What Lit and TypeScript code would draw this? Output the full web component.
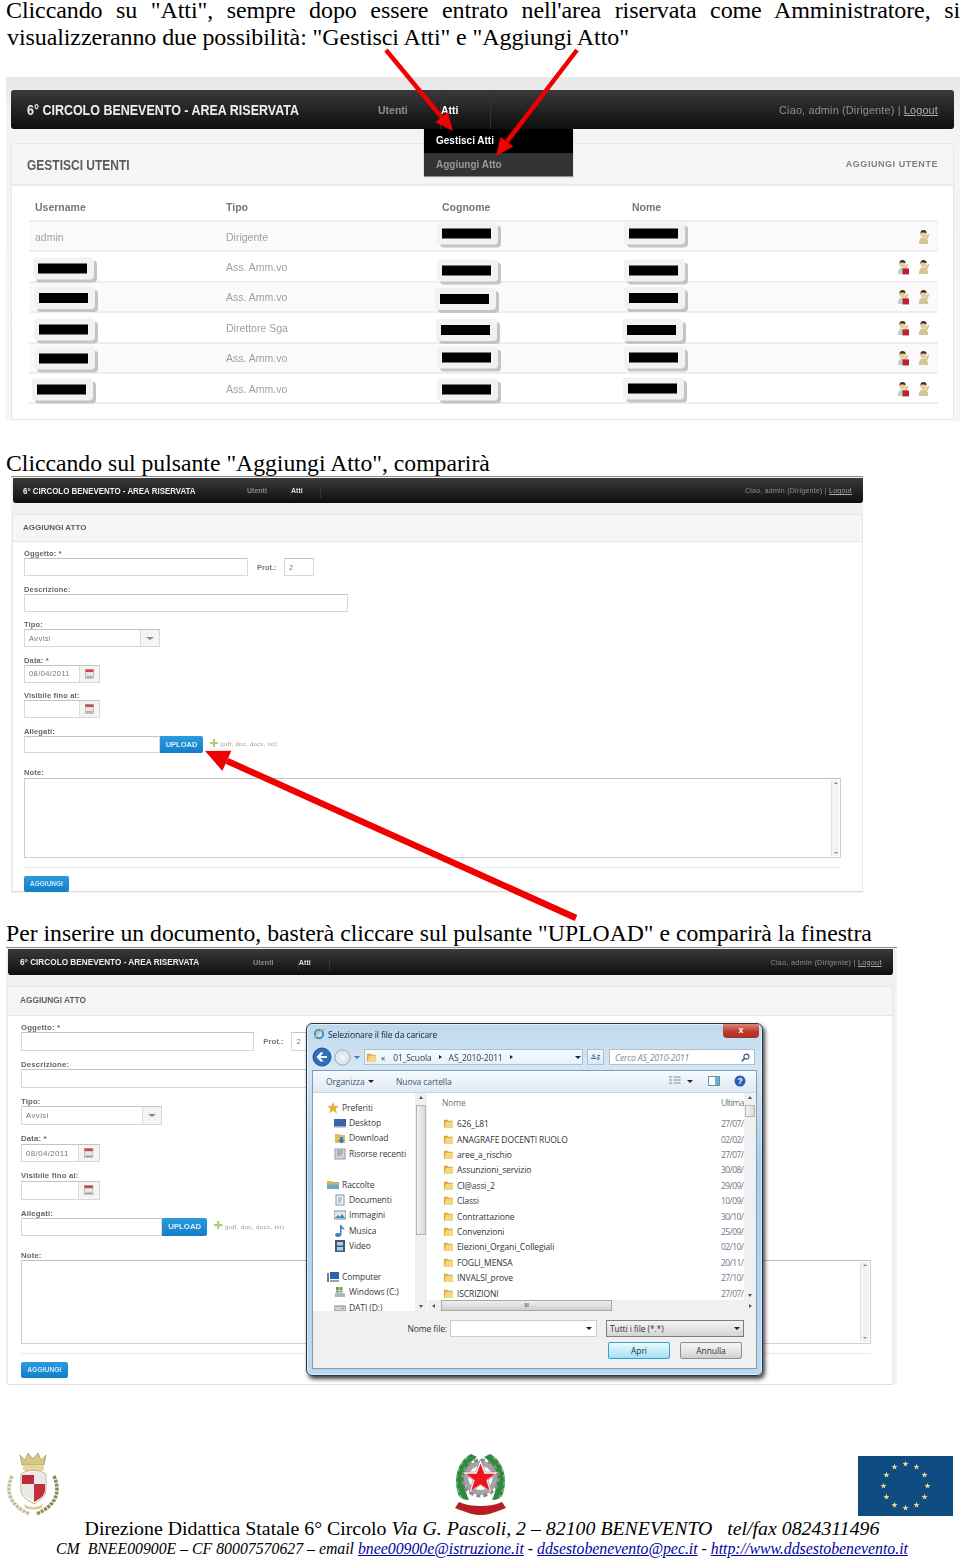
import { LitElement, html, css, svg, nothing } from "lit";
import { customElement, property } from "lit/decorators.js";

/* ---------- small icons ---------- */
const folder = html`<svg class="ic" viewBox="0 0 12 12" width="11" height="11"><path d="M1 2h4l1 1h4.5v8H1z" fill="#d9a93f"/><path d="M3 4h8v7H1.5z" fill="#f3d77f"/></svg>`;

const person = (del: boolean) => html`<svg viewBox="0 0 14 17" width="13" height="16">
  <path d="M2 16c0-5 2-7 5-7s5 2 5 7z" fill="${del ? "#b5d3cf" : "#d3c595"}"/>
  <path d="M9 9l3-4 1.5 1-2.5 5z" fill="#d3c595"/>
  <circle cx="7" cy="5.5" r="3.2" fill="#ecc99a"/>
  <path d="M3.6 5c0-3 1.6-4 3.4-4s3.4 1 3.4 3.4C8.5 4 6 3.8 5 3.5 4.8 4.5 4.3 5 3.6 5z" fill="#3a2c18"/>
  ${del ? svg`<rect x="7" y="10" width="7" height="6.5" fill="#c3202f"/>` : nothing}
</svg>`;

const calendar = html`<svg viewBox="0 0 10 11" width="9" height="10"><rect x=".5" y=".5" width="9" height="10" fill="#e6e6e6" stroke="#999" stroke-width=".6"/><rect x=".5" y=".5" width="9" height="2.8" fill="#d0454c"/><rect x="1.5" y="8" width="7" height="1.5" fill="#9a9a9a"/></svg>`;

/* ---------- dark site bar ---------- */
@customElement("site-bar")
class SiteBar extends LitElement {
  static styles = css`
    :host {
      display: flex;
      align-items: center;
      height: 39px;
      padding: 0 16px;
      box-sizing: border-box;
      border-radius: 3px;
      background: linear-gradient(#3a3a3a, #262626 45%, #0e0e0e);
      font-family: "Liberation Sans", Arial, sans-serif;
      color: #8f8f8f;
      font-size: 10.5px;
    }
    .t {
      width: 351px;
      flex: none;
      font-weight: 700;
      font-size: 15px;
      color: #eee;
      white-space: nowrap;
    }
    .t span { display: inline-block; transform: scaleX(.832); transform-origin: 0 50%; }
    .n {
      display: flex;
      align-items: center;
      width: 63px;
      height: 100%;
      font-weight: 700;
      box-sizing: border-box;
      border-right: 1px solid #333;
    }
    .n.on { color: #fff; width: 50px; }
    .r { margin-left: auto; font-size: 11px; letter-spacing: .1px; }
    .r u { color: #aaa; }
    :host([compact]) {
      height: 25px;
      padding: 0 11px 0 10px;
      border-radius: 0 0 3px 3px;
      font-size: 7px;
    }
    :host([compact]) .t { width: 224px; font-size: 9px; }
    :host([compact]) .t span { transform: scaleX(.88); }
    :host([compact]) .n { width: 44px; height: 60%; color: #888; }
    :host([compact]) .n.on { color: #ddd; width: 30px; }
    :host([compact]) .r { font-size: 7px; letter-spacing: .25px; }
  `;
  render() {
    return html`<div class="t"><span>6° CIRCOLO BENEVENTO - AREA RISERVATA</span></div>
      <div class="n">Utenti</div>
      <div class="n on">Atti</div>
      <div class="r">Ciao, admin (Dirigente) | <u>Logout</u></div>`;
  }
}

/* ---------- first screenshot: Gestisci utenti ---------- */
type Off = [number, number] | null;
const rows: { user: string; tipo: string; u: Off; c: Off; n: Off; del: boolean }[] = [
  { user: "admin", tipo: "Dirigente", u: null, c: [-5, -4], n: [-8, -4], del: false },
  { user: "", tipo: "Ass. Amm.vo", u: [-2, 1], c: [-5, 3], n: [-8, 3], del: true },
  { user: "", tipo: "Ass. Amm.vo", u: [-1, 0.5], c: [-7, 1.5], n: [-8, 0.5], del: true },
  { user: "", tipo: "Direttore Sga", u: [-1, 1], c: [-6, 1.5], n: [-10, 1.5], del: true },
  { user: "", tipo: "Ass. Amm.vo", u: [-1, 0], c: [-5, -1], n: [-8, -1], del: true },
  { user: "", tipo: "Ass. Amm.vo", u: [-3, 0], c: [-5, 0], n: [-9, -1], del: true },
];

@customElement("users-shot")
class UsersShot extends LitElement {
  static styles = css`
    :host {
      display: block;
      position: relative;
      margin-left: 6px;
      width: 954px;
      height: 344px;
      padding: 13px 0 0 5px;
      box-sizing: border-box;
      background: linear-gradient(#e6e6e6, #f3f3f3 10%, #f6f6f6);
      font-family: "Liberation Sans", Arial, sans-serif;
      filter: blur(.35px);
    }
    site-bar { width: 943px; box-sizing: border-box; }
    .card {
      margin-top: 14px;
      width: 943px;
      height: 277px;
      box-sizing: border-box;
      border: 1px solid #e6e6e6;
      border-radius: 4px;
      background: #fff;
      overflow: hidden;
    }
    .head {
      display: flex;
      align-items: center;
      justify-content: space-between;
      height: 42px;
      padding: 0 15px;
      background: #f6f6f6;
      border-bottom: 2px solid #eaeaea;
      box-sizing: border-box;
    }
    h2 {
      margin: 0;
      font-size: 15px;
      color: #5a5a5a;
      transform: scaleX(.8);
      transform-origin: 0 50%;
    }
    .add { font-size: 9px; font-weight: 700; color: #808080; letter-spacing: .55px; }
    .table { margin: 0 15px 0 17px; }
    .tr {
      display: grid;
      grid-template-columns: 191px 216px 190px 1fr auto;
      align-items: center;
      height: 30.4px;
      box-sizing: border-box;
      padding: 1px 0 0 6px;
      border-bottom: 2px solid #eeeeee;
      font-size: 10.5px;
      color: #a0a0a0;
    }
    .tr.alt { background: #fafafa; }
    .tr.th { height: 36px; padding-top: 8px; font-weight: 700; color: #777; }
    .key {
      width: 61px;
      height: 22px;
      padding: 6px 0 0 5px;
      box-sizing: border-box;
      border-radius: 4px;
      background: #f2f2f2;
      box-shadow: 3px 3px 0 #c4c4c4;
    }
    .key i { display: block; width: 49px; height: 10px; background: #000; }
    .act {
      display: flex;
      justify-content: flex-end;
      gap: 8px;
      padding-right: 8px;
    }
    .drop {
      position: absolute;
      left: 418px;
      top: 52px;
      width: 149px;
      height: 47px;
      font-size: 10px;
      font-weight: 700;
      background: #333;
      box-shadow: 0 1px 1px rgba(0, 0, 0, .4);
    }
    .drop div { height: 23.5px; line-height: 24px; padding-left: 12px; color: #999; }
    .drop div:first-child { background: #000; color: #fff; }
  `;
  private key(o: Off) {
    if (!o) return nothing;
    return html`<div class="key" style="transform:translate(${o[0]}px,${o[1] + 0.5}px)"><i></i></div>`;
  }
  render() {
    return html`<site-bar></site-bar>
      <div class="card">
        <div class="head"><h2>GESTISCI UTENTI</h2><span class="add">AGGIUNGI UTENTE</span></div>
        <div class="table">
          <div class="tr th"><span>Username</span><span>Tipo</span><span>Cognome</span><span>Nome</span></div>
          ${rows.map(
            (r, i) => html`<div class="tr ${i % 2 ? "" : "alt"}">
              ${r.u ? this.key(r.u) : html`<span>${r.user}</span>`}
              <span>${r.tipo}</span>
              ${this.key(r.c)}
              ${this.key(r.n)}
              <div class="act">${r.del ? person(true) : nothing}${person(false)}</div>
            </div>`
          )}
        </div>
      </div>
      <div class="drop"><div>Gestisci Atti</div><div>Aggiungi Atto</div></div>`;
  }
}

/* ---------- second / third screenshot: Aggiungi atto form ---------- */
@customElement("atto-shot")
class AttoShot extends LitElement {
  static styles = css`
    :host {
      display: block;
      width: 852px;
      height: 417px;
      box-sizing: border-box;
      border-top: 1px solid #8c8c8c;
      background: #f1f1f1;
      font-family: "Liberation Sans", Arial, sans-serif;
      filter: blur(.4px);
      --gap: 7.5px;
      --up: 8px;
      --nm: 1px;
      --bl: 11px;
      --tl: 10px;
      --hl: 10px;
    }
    :host([wide]) {
      zoom: 1.04;
      width: 857px;
      height: 420px;
      --gap: 7.75px;
      --up: 7px;
      --nm: 0px;
      --bl: 12.4px;
      --tl: 11.5px;
      --hl: 11.5px;
    }
    site-bar { margin: 1px 0 0 2px; padding-left: var(--tl) !important; }
    :host([wide]) site-bar { margin-right: 4px; }
    .card {
      margin: 11px 0 0 1px;
      border: 1px solid #e8e8e8;
      border-bottom: 1px solid #ddd;
      background: #fff;
      height: 378px;
      box-sizing: border-box;
    }
    :host([wide]) .card { margin-right: 4px; height: 383px; }
    .head {
      height: 26px;
      line-height: 26px;
      padding-left: var(--hl);
      background: #f6f6f6;
      border-bottom: 1px solid #e6e6e6;
      font-size: 8px;
      font-weight: 700;
      color: #5e5e5e;
    }
    .body { padding: 7px 0 0 var(--bl); }
    .lab {
      height: 9px;
      line-height: 9px;
      font-size: 7.5px;
      font-weight: 700;
      color: #666;
      letter-spacing: .15px;
    }
    .row {
      display: flex;
      align-items: center;
      height: 18px;
      margin-bottom: calc(var(--gap) + 1px);
      color: #777;
      font-size: 7.5px;
    }
    .in {
      height: 18px;
      box-sizing: border-box;
      display: flex;
      align-items: center;
      border: 1px solid #d8d8d8;
      border-top-color: #c4c4c4;
      background: #fff;
      padding-left: 4px;
      letter-spacing: .4px;
    }
    .seg {
      margin-left: auto;
      align-self: stretch;
      display: flex;
      align-items: center;
      justify-content: center;
      border-left: 1px solid #ddd;
      background: #f4f4f4;
    }
    .arr { width: 0; height: 0; border: 4px solid transparent; border-top: 3px solid #888; border-bottom: 0; }
    .prot { margin: 0 7px 0 9px; width: 20px; font-weight: 700; white-space: nowrap; }
    .up {
      display: flex;
      align-items: center;
      justify-content: center;
      width: 43px;
      height: 17px;
      background: linear-gradient(#2a9be0, #137ec6);
      border-radius: 0 2px 2px 0;
      color: #dff1fb;
      font-size: 7.5px;
      font-weight: 700;
    }
    .plus { margin: -3px 2px 0 7px; }
    .ext { font-size: 6px; color: #999; letter-spacing: .3px; white-space: nowrap; }
    .row.up-row { height: 17px; margin-bottom: calc(var(--gap) + var(--up)); }
    .note-lab { margin-bottom: var(--nm); }
    .note {
      width: 817px;
      height: 80px;
      box-sizing: border-box;
      border: 1px solid #d0d0d0;
      border-top-color: #c0c0c0;
      background: #fff;
      display: flex;
      justify-content: flex-end;
      padding: 1px;
      margin-bottom: 9px;
    }
    .sb { width: 8px; background: #f3f3f3; border-left: 1px solid #e4e4e4; display: flex; flex-direction: column; justify-content: space-between; align-items: center; padding: 2px 0; box-sizing: border-box; }
    .sb i { width: 0; height: 0; border: 2px solid transparent; }
    .sb i:first-child { border-bottom: 2px solid #888; border-top: 0; }
    .sb i:last-child { border-top: 2px solid #888; border-bottom: 0; }
    .hr { width: 817px; height: 1px; background: #eaeaea; margin-bottom: 7.5px; }
    .btn {
      width: 45px;
      height: 16px;
      line-height: 16px;
      text-align: center;
      background: linear-gradient(#2a9be0, #137ec6);
      border-radius: 2px;
      color: #cfe9f8;
      font-size: 6.5px;
      font-weight: 700;
    }
  `;
  @property({ type: Boolean, reflect: true }) wide = false;
  render() {
    return html`<site-bar compact></site-bar>
      <div class="card">
        <div class="head">AGGIUNGI ATTO</div>
        <div class="body">
          <div class="lab">Oggetto: *</div>
          <div class="row"><div class="in" style="width:224px"></div><span class="prot">Prot.:</span><div class="in" style="width:30px">2</div></div>
          <div class="lab">Descrizione:</div>
          <div class="row"><div class="in" style="width:324px"></div></div>
          <div class="lab">Tipo:</div>
          <div class="row"><div class="in" style="width:136px">Avvisi<span class="seg" style="width:18px"><i class="arr"></i></span></div></div>
          <div class="lab">Data: *</div>
          <div class="row"><div class="in" style="width:76px">08/04/2011<span class="seg" style="width:19px">${calendar}</span></div></div>
          <div class="lab">Visibile fino al:</div>
          <div class="row"><div class="in" style="width:76px"><span class="seg" style="width:19px">${calendar}</span></div></div>
          <div class="lab">Allegati:</div>
          <div class="row up-row">
            <div class="in" style="width:136px;height:17px"></div>
            <div class="up">UPLOAD</div>
            <svg class="plus" viewBox="0 0 8 8" width="8" height="8"><path d="M3 0h2v3h3v2H5v3H3V5H0V3h3z" fill="#a5cf7a"/></svg>
            <span class="ext">(pdf, doc, docx, txt)</span>
          </div>
          <div class="lab note-lab">Note:</div>
          <div class="note"><div class="sb"><i></i><i></i></div></div>
          <div class="hr"></div>
          <div class="btn">AGGIUNGI</div>
        </div>
      </div>`;
  }
}

/* ---------- Windows 7 file dialog ---------- */
const nav: { t: string; lv: number; ic: string }[] = [
  { t: "Preferiti", lv: 0, ic: "star" },
  { t: "Desktop", lv: 1, ic: "desk" },
  { t: "Download", lv: 1, ic: "fold" },
  { t: "Risorse recenti", lv: 1, ic: "rec" },
  { t: "", lv: 0, ic: "" },
  { t: "Raccolte", lv: 0, ic: "lib" },
  { t: "Documenti", lv: 1, ic: "doc" },
  { t: "Immagini", lv: 1, ic: "img" },
  { t: "Musica", lv: 1, ic: "mus" },
  { t: "Video", lv: 1, ic: "vid" },
  { t: "", lv: 0, ic: "" },
  { t: "Computer", lv: 0, ic: "pc" },
  { t: "Windows (C:)", lv: 1, ic: "drv" },
  { t: "DATI (D:)", lv: 1, ic: "hd" },
];
const navIcon: Record<string, unknown> = {
  star: svg`<path d="M6 0l1.7 4H12L8.6 6.7 10 11.5 6 8.8 2 11.5l1.4-4.8L0 4h4.3z" fill="#e8b23c"/>`,
  desk: svg`<rect x="0" y="2" width="12" height="8" fill="#3a64a8"/><rect x="0" y="9" width="12" height="1.5" fill="#9ab"/>`,
  fold: svg`<path d="M1 2h4l1 1h5v8H1z" fill="#e2bc5c"/><path d="M6 5h3v3h2l-3.5 3.5L4 8h2z" fill="#2f7fc6"/>`,
  rec: svg`<rect x="1" y="1" width="10" height="10" fill="#cfd6de" stroke="#99a"/><path d="M3 3h6M3 5h6M3 7h4" stroke="#889"/>`,
  lib: svg`<path d="M0 3h12v7H0z" fill="#6aa9c9"/><path d="M0 2h5l1 1.5H12v2H0z" fill="#d9b453"/>`,
  doc: svg`<rect x="2" y="1" width="8" height="10" fill="#eef1f4" stroke="#8a97a5"/><path d="M4 4h4M4 6h4M4 8h3" stroke="#8a97a5"/>`,
  img: svg`<rect x="0" y="2" width="12" height="8" fill="#dfe8ef" stroke="#7f8f9f"/><path d="M1 9l3-3 2 2 2-3 3 4z" fill="#3f88b5"/>`,
  mus: svg`<path d="M6 0h1.5c0 2 3 2 3 5-1-1-2-1.5-3-1.5V9.5C7.5 11 6 12 4 12S1 11 1 9.8 2.5 8 4 8c1 0 1.5.3 2 .6z" fill="#3d7fc4"/>`,
  vid: svg`<rect x="1" y="0" width="10" height="12" fill="#47596b"/><rect x="3" y="2" width="6" height="3.5" fill="#a8d0e8"/><rect x="3" y="7" width="6" height="3.5" fill="#a8d0e8"/>`,
  pc: svg`<rect x="3" y="1" width="9" height="7" fill="#2b63b4"/><rect x="0" y="2" width="2" height="9" fill="#77808a"/><rect x="3" y="9" width="9" height="2" fill="#9aa4ae"/>`,
  drv: svg`<rect x="1" y="7" width="10" height="4" fill="#aeb6bd"/><path d="M2 1h3v3H2zM5.5 1h3v3h-3zM2 4.5h3v2H2zM5.5 4.5h3v2h-3z" fill="#6ea05c"/>`,
  hd: svg`<rect x="0" y="4" width="12" height="5" rx="1" fill="#cfd4d8" stroke="#888"/><rect x="8" y="6" width="2" height="1" fill="#5a5"/>`,
};
const files: [string, string][] = [
  ["626_L81", "27/07/"],
  ["ANAGRAFE DOCENTI RUOLO", "02/02/"],
  ["aree_a_rischio", "27/07/"],
  ["Assunzioni_servizio", "30/08/"],
  ["Cl@assi_2", "29/09/"],
  ["Classi", "10/09/"],
  ["Contrattazione", "30/10/"],
  ["Convenzioni", "25/09/"],
  ["Elezioni_Organi_Collegiali", "02/10/"],
  ["FOGLI_MENSA", "20/11/"],
  ["INVALSI_prove", "27/10/"],
  ["ISCRIZIONI", "27/07/"],
];

@customElement("file-dialog")
class FileDialog extends LitElement {
  static styles = css`
    :host {
      display: flex;
      flex-direction: column;
      width: 457px;
      height: 353px;
      box-sizing: border-box;
      padding: 0 5px 6px;
      border: 1px solid #2a3644;
      border-radius: 6px;
      background: linear-gradient(180deg, #bcd8ee, #d4e6f4 12%, #a9cde9 40%, #bcd9ef);
      box-shadow: 2px 3px 4px rgba(0, 0, 0, .75), inset 0 0 0 1px rgba(255, 255, 255, .5);
      font-family: "Open Sans", "Noto Sans", sans-serif;
      font-size: 8.5px;
      letter-spacing: -.1px;
      color: #3a3a3a;
      filter: blur(.35px);
    }
    .title { height: 24px; padding-bottom: 4px; box-sizing: border-box; flex: none; display: flex; align-items: center; padding-left: 1px; color: #223; position: relative; }
    .title svg { margin-right: 3px; }
    .close {
      position: absolute;
      right: -2px;
      top: 0;
      width: 36px;
      height: 14px;
      border-radius: 0 0 4px 4px;
      background: linear-gradient(#d9867a, #c0392b 55%, #a83226);
      color: #fff;
      font: 700 9px/13px "Liberation Sans", sans-serif;
      text-align: center;
    }
    .addr { height: 18px; flex: none; display: flex; align-items: center; gap: 0; margin-bottom: 4px; }
    .box {
      height: 16px;
      box-sizing: border-box;
      display: flex;
      align-items: center;
      background: #fff;
      border: 1px solid #a9bfd4;
      white-space: nowrap;
    }
    .path { margin-left: 4px; width: 219px; gap: 4px; padding-left: 1px; background: linear-gradient(#f6fbff, #e5f1fa); }
    .tri { width: 0; height: 0; border: 3px solid transparent; border-top: 3px solid #222; border-bottom: 0; flex: none; }
    .tr { width: 0; height: 0; border: 2.5px solid transparent; border-left: 3px solid #222; border-right: 0; flex: none; }
    .ref { margin-left: 4px; width: 17px; justify-content: center; background: linear-gradient(#f3f8fc, #dbe8f3); }
    .find { margin-left: 5px; width: 146px; padding: 0 4px 0 5px; font-style: italic; color: #7d8791; justify-content: space-between; }
    .inner {
      flex: 1;
      min-height: 0;
      display: flex;
      flex-direction: column;
      background: #fff;
      border: 1px solid #7f9db9;
      overflow: hidden;
    }
    .tools {
      height: 22px;
      flex: none;
      display: flex;
      align-items: center;
      padding: 0 10px 1px 13px;
      background: linear-gradient(#f6fafd, #dfeaf4);
      border-bottom: 1px solid #c7d5e2;
      box-sizing: border-box;
      color: #45586c;
    }
    .tools .o { display: flex; align-items: center; gap: 3px; width: 70px; }
    .tools .right { margin-left: auto; display: flex; align-items: center; }
    .mid { flex: 1; min-height: 0; display: flex; }
    .nav { width: 101px; flex: none; padding-top: 7px; }
    .it { height: 15.4px; line-height: 8px; display: flex; align-items: center; white-space: nowrap; padding-left: 14px; gap: 3px; }
    .it.s { padding-left: 21px; }
    .it svg { flex: none; }
    .vs { width: 12px; flex: none; background: #f0f0f0; display: flex; flex-direction: column; justify-content: space-between; align-items: center; padding: 3px 0; box-sizing: border-box; position: relative; }
    .vs.a { margin: 0 1px; }
    .up { width: 0; height: 0; border: 2.5px solid transparent; border-bottom: 3px solid #555; border-top: 0; }
    .dn { width: 0; height: 0; border: 2.5px solid transparent; border-top: 3px solid #555; border-bottom: 0; }
    .th { position: absolute; left: 1px; right: 1px; background: linear-gradient(90deg, #f3f3f3, #d9d9d9); border: 1px solid #b5b5b5; box-sizing: border-box; }
    .main { flex: 1; min-width: 0; display: flex; flex-direction: column; }
    .listwrap { flex: 1; min-height: 0; display: flex; }
    .list { flex: 1; min-width: 0; }
    .lh { height: 19px; display: flex; align-items: center; justify-content: space-between; padding-left: 14px; color: #69788a; margin-bottom: 4px; }
    .lh span:last-child, .date { width: 23px; white-space: nowrap; flex: none; color: #69788a; letter-spacing: -.55px; }
    .f { height: 15.42px; display: flex; align-items: center; padding-left: 15px; gap: 3px; white-space: nowrap; color: #333; }
    .f .nm { flex: 1; min-width: 0; }
    .hs { height: 11px; flex: none; background: #f0f0f0; position: relative; display: flex; align-items: center; justify-content: space-between; padding: 0 4px; box-sizing: border-box; }
    .hs .tb { position: absolute; left: 13px; top: 0; bottom: 0; width: 171px; background: linear-gradient(#efefef, #cfcfcf); border: 1px solid #a8a8a8; box-sizing: border-box; text-align: center; font: 6px/8px "Liberation Sans", sans-serif; }
    .lt { width: 0; height: 0; border: 2.5px solid transparent; border-right: 3px solid #555; border-left: 0; }
    .rt { width: 0; height: 0; border: 2.5px solid transparent; border-left: 3px solid #555; border-right: 0; }
    .bottom { height: 57px; flex: none; background: #f0f0f0; position: relative; padding: 9px 12px 0 0; box-sizing: border-box; }
    .b1 { display: flex; align-items: center; justify-content: flex-end; height: 17px; }
    .b1 .nf { margin-right: 3px; color: #333; }
    .nfin { width: 147px; justify-content: flex-end; padding-right: 4px; height: 17px; border-color: #c6ced6; }
    .sel {
      margin-left: 9px;
      width: 138px;
      height: 17px;
      padding: 0 3px;
      justify-content: space-between;
      background: linear-gradient(#f4f4f4, #d5d5d5);
      border-color: #7d7d7d;
      color: #333;
    }
    .b2 { display: flex; justify-content: flex-end; gap: 10px; margin: 5px 2px 0 0; }
    .bt {
      width: 62px;
      height: 17px;
      line-height: 15px;
      box-sizing: border-box;
      text-align: center;
      border: 1px solid #8d8d8d;
      border-radius: 2px;
      background: linear-gradient(#f5f5f5, #e6e6e6 50%, #cfcfcf);
      color: #333;
    }
    .bt.f1 { border: 1px solid #3c9cc8; background: linear-gradient(#eafaff, #c5ecfb 50%, #a4dff6); }
  `;
  render() {
    return html`
      <div class="title">
        <svg viewBox="0 0 12 12" width="12" height="12"><circle cx="6" cy="6" r="4.2" fill="none" stroke="#3d8fd8" stroke-width="2"/><path d="M1 11C3 6 7 2 11.5 1" stroke="#e3b23a" stroke-width="1.2" fill="none"/></svg>
        Selezionare il file da caricare
        <div class="close">x</div>
      </div>
      <div class="addr">
        <svg viewBox="0 0 20 20" width="20" height="20"><circle cx="10" cy="10" r="9" fill="#2c6fbd" stroke="#1d4f8c"/><path d="M15 9H8.5l3-3.5H8.5L4.5 10l4 4.5h3l-3-3.5H15z" fill="#fff"/></svg>
        <svg viewBox="0 0 18 18" width="17" height="17" style="margin-left:2px"><circle cx="9" cy="9" r="8" fill="#dfe8f0" stroke="#8ea3b7"/><circle cx="9" cy="9" r="3" fill="#eef3f7"/></svg>
        <i class="tri" style="border-top-color:#3f7fb8;margin-left:3px"></i>
        <div class="box path">
          ${folder}<span>«</span><span style="margin-left:4px">01_Scuola</span><i class="tr" style="margin:0 3px"></i><span>AS_2010-2011</span><i class="tr" style="margin-left:3px"></i>
          <i class="tri" style="margin-left:auto;margin-right:1px"></i>
        </div>
        <div class="box ref"><svg viewBox="0 0 12 8" width="11" height="8"><path d="M1 5.5h6M8 2.5h3M5 1L3 2.5 5 4M8 4l2 1.5L8 7" stroke="#4277a8" stroke-width="1.1" fill="none"/></svg></div>
        <div class="box find"><span>Cerco AS_2010-2011</span>
          <svg viewBox="0 0 10 10" width="9" height="9"><circle cx="6" cy="4" r="2.8" fill="none" stroke="#2c5f8e" stroke-width="1.3"/><path d="M4 6L1 9" stroke="#2c5f8e" stroke-width="1.7"/></svg>
        </div>
      </div>
      <div class="inner">
        <div class="tools">
          <span class="o">Organizza <i class="tri"></i></span><span>Nuova cartella</span>
          <span class="right">
            <svg viewBox="0 0 12 10" width="12" height="10"><path d="M0 1h3M0 4h3M0 7h3M4.5 1h7M4.5 4h7M4.5 7h7" stroke="#7b8a96"/></svg>
            <i class="tri" style="margin-left:6px"></i>
            <svg viewBox="0 0 12 10" width="12" height="10" style="margin-left:15px"><rect x=".5" y=".5" width="11" height="9" fill="#fdfefe" stroke="#6d8ea8"/><rect x="7" y="1" width="4" height="8" fill="#6fb0c9"/></svg>
            <svg viewBox="0 0 12 12" width="12" height="12" style="margin-left:14px"><circle cx="6" cy="6" r="5.5" fill="#2b5fb3"/><text x="6" y="9" text-anchor="middle" font-size="8.5" font-weight="700" fill="#fff" font-family="Liberation Sans">?</text></svg>
          </span>
        </div>
        <div class="mid">
          <div class="nav">
            ${nav.map((n) =>
              n.t
                ? html`<div class="it ${n.lv ? "s" : ""}"><svg viewBox="0 0 12 12" width="12" height="12">${navIcon[n.ic]}</svg>${n.t}</div>`
                : html`<div class="it"></div>`
            )}
          </div>
          <div class="vs a"><i class="up"></i><div class="th" style="top:12px;height:130px"></div><i class="dn"></i></div>
          <div class="main">
            <div class="listwrap">
              <div class="list">
                <div class="lh"><span>Nome</span><span>Ultima</span></div>
                ${files.map(
                  ([a, d]) => html`<div class="f">${folder}<span class="nm">${a}</span><span class="date">${d}</span></div>`
                )}
              </div>
              <div class="vs"><i class="up"></i><div class="th" style="top:12px;height:12px"></div><i class="dn"></i></div>
            </div>
            <div class="hs"><i class="lt"></i><div class="tb">III</div><i class="rt"></i></div>
          </div>
        </div>
        <div class="bottom">
          <div class="b1">
            <span class="nf">Nome file:</span>
            <div class="box nfin"><i class="tri"></i></div>
            <div class="box sel"><span>Tutti i file (*.*)</span><i class="tri"></i></div>
          </div>
          <div class="b2"><div class="bt f1">Apri</div><div class="bt">Annulla</div></div>
        </div>
      </div>`;
  }
}

/* ---------- red arrows ---------- */
function arrow(x1: number, y1: number, x2: number, y2: number, w: number, head: number, hw: number) {
  const a = Math.atan2(y2 - y1, x2 - x1);
  const bx = x2 - Math.cos(a) * head;
  const by = y2 - Math.sin(a) * head;
  const nx = -Math.sin(a) * hw;
  const ny = Math.cos(a) * hw;
  return svg`<line x1="${x1}" y1="${y1}" x2="${bx}" y2="${by}" stroke="#f00000" stroke-width="${w}"/>
    <polygon points="${x2},${y2} ${bx + nx},${by + ny} ${bx - nx},${by - ny}" fill="#f00000"/>`;
}

/* ---------- footer logos ---------- */
const crest = html`<svg viewBox="0 0 54 64" width="54" height="64">
  <path d="M6 24C-1 40 4 54 24 62" fill="none" stroke="#c4bd96" stroke-width="3.5" stroke-dasharray="3 1"/>
  <path d="M48 24c7 16 2 30-18 38" fill="none" stroke="#8d8657" stroke-width="3.5" stroke-dasharray="3 1"/>
  <path d="M16 13l-2-10 5 5 3-7 5 6 5-6 3 7 5-5-2 10z" fill="#d8c684" stroke="#9c8a4e" stroke-width=".6"/>
  <rect x="17" y="13" width="21" height="6" rx="2" fill="#e6d79a"/>
  <path d="M15 22c8-5 16-5 25 0v16c0 6-6 10-12 14-7-4-13-8-13-14z" fill="#fff" stroke="#bdb17f"/>
  <path d="M16 22.5c8-4 16-4 23 0V32H28v18c-7-4-12-7-12-12z" fill="#e9e9ec"/>
  <path d="M16 32h12v-9h-12z" fill="#bb2a36"/>
  <path d="M28 32h11v6c0 5-5 9-11 12z" fill="#c42d3a"/>
  <path d="M18 52c6 4 13 4 19 0l-1 4c-5 2-12 2-17 0z" fill="#d9cf9a"/>
</svg>`;

const emblem = html`<svg viewBox="0 0 55 64" width="55" height="64">
  <path d="M18 2C5 8-1 28 6 44c3 3 6 4 10 4C9 34 10 14 24 5z" fill="#2f8a3c"/>
  <path d="M37 2c13 6 19 26 12 42-3 3-6 4-10 4 7-14 6-34-8-43z" fill="#2f8a3c"/>
  <path d="M15 5C3 14 0 32 9 46M40 5c12 9 15 27 6 41" fill="none" stroke="#7fc08a" stroke-width="1.5" stroke-dasharray="4 3"/>
  <circle cx="27.5" cy="26" r="17" fill="#a4a4a4"/>
  <circle cx="27.5" cy="26" r="18" fill="none" stroke="#8a8a8a" stroke-width="3" stroke-dasharray="4 3.06"/>
  <circle cx="27.5" cy="26" r="12" fill="#fff"/>
  <path d="M27.5 7l4.9 13h13.4l-10.9 8 4.1 13-11.5-8-11.5 8 4.1-13-10.9-8h13.4z" fill="#fff" stroke="#777" stroke-width=".6"/>
  <path d="M27.5 11.5l3.9 10.3h10.7l-8.7 6.4 3.3 10.4-9.2-6.3-9.200 6.300 3.300-10.400-8.700-6.400h10.700z" fill="#f0141e"/>
  <path d="M6 50c7 3 14 4 21.5 4S42 53 49 50l4 6-5 2c-8 3-14 5-20.500 5S15 61 7 58l-5-2z" fill="#b81d24"/>
</svg>`;

const flag = () => {
  const stars = [];
  for (let i = 0; i < 12; i++) {
    const a = (i * Math.PI) / 6;
    const cx = 47.5 + Math.sin(a) * 22;
    const cy = 30 - Math.cos(a) * 22;
    stars.push(
      svg`<polygon transform="translate(${cx} ${cy})" points="0,-3.2 .8,-1 3.1,-1 1.2,.4 1.9,2.6 0,1.3 -1.9,2.6 -1.2,.4 -3.1,-1 -.8,-1" fill="#e9dd8a"/>`
    );
  }
  return html`<svg viewBox="0 0 95 60" width="95" height="60"><rect width="95" height="60" fill="#0f4c81"/>${stars}</svg>`;
};

/* ---------- page ---------- */
@customElement("app-root")
class AppRoot extends LitElement {
  static styles = css`
    :host {
      display: block;
      position: relative;
      width: 960px;
      height: 1563px;
      overflow: hidden;
      background: #fff;
      font-family: "Liberation Serif", "Times New Roman", serif;
      color: #000;
    }
    .p {
      margin: 0;
      padding-left: 6px;
      box-sizing: border-box;
      font-size: 23.7px;
      line-height: 27px;
      white-space: nowrap;
    }
    .p1 {
      height: 77px;
      width: 960px;
      font-size: 24px;
      white-space: normal;
      letter-spacing: -.09px;
    }
    .p1 span { display: block; }
    .l1 { line-height: 21px; text-align: justify; text-align-last: justify; }
    .l2 { margin-top: 3px; padding-left: 1px; }
    .p2 { height: 55px; padding-top: 29px; }
    .p3 { height: 54px; padding-top: 27px; }
    .s2 { margin-left: 11px; }
    .s3 { position: relative; margin-left: 6px; height: 437px; }
    file-dialog { position: absolute; left: 300px; top: 76px; }
    .logos { display: flex; margin-top: 68px; height: 65px; }
    .logos .a { margin-left: 6px; }
    .logos .b { margin-left: 393px; }
    .logos .c { margin-left: 350px; margin-top: 4px; }
    .f1, .f2 { text-align: center; padding-left: 4px; white-space: pre; }
    .f1 { font-size: 19.83px; line-height: 22px; }
    .f2 { font-size: 15.8px; line-height: 20px; font-style: italic; }
    .f2 a { color: #0000a0; text-decoration: underline; }
    .arrows { position: absolute; left: 0; top: 0; pointer-events: none; }
  `;
  render() {
    return html`
      <p class="p p1"><span class="l1">Cliccando su "Atti", sempre dopo essere entrato nell'area riservata come Amministratore, si</span><span class="l2">visualizzeranno due possibilità: "Gestisci Atti" e "Aggiungi Atto"</span></p>
      <users-shot></users-shot>
      <p class="p p2">Cliccando sul pulsante "Aggiungi Atto", comparirà</p>
      <atto-shot class="s2"></atto-shot>
      <p class="p p3">Per inserire un documento, basterà cliccare sul pulsante "UPLOAD" e comparirà la finestra</p>
      <div class="s3"><atto-shot wide></atto-shot><file-dialog></file-dialog></div>
      <div class="logos"><span class="a">${crest}</span><span class="b">${emblem}</span><span class="c">${flag()}</span></div>
      <div class="f1">Direzione Didattica Statale 6° Circolo <i>Via G. Pascoli, 2 – 82100 BENEVENTO   tel/fax 0824311496</i></div>
      <div class="f2">CM  BNEE00900E – CF 80007570627 – email <a>bnee00900e@istruzione.it</a> - <a>ddsestobenevento@pec.it</a> - <a>http://www.ddsestobenevento.it</a></div>
      <svg class="arrows" width="960" height="1563" viewBox="0 0 960 1563">
        ${arrow(386, 50, 453, 131, 4.5, 18, 8)}
        ${arrow(577, 50, 496, 156, 4.5, 18, 8)}
        ${arrow(576, 918, 205, 751, 6.5, 24, 11)}
      </svg>`;
  }
}
